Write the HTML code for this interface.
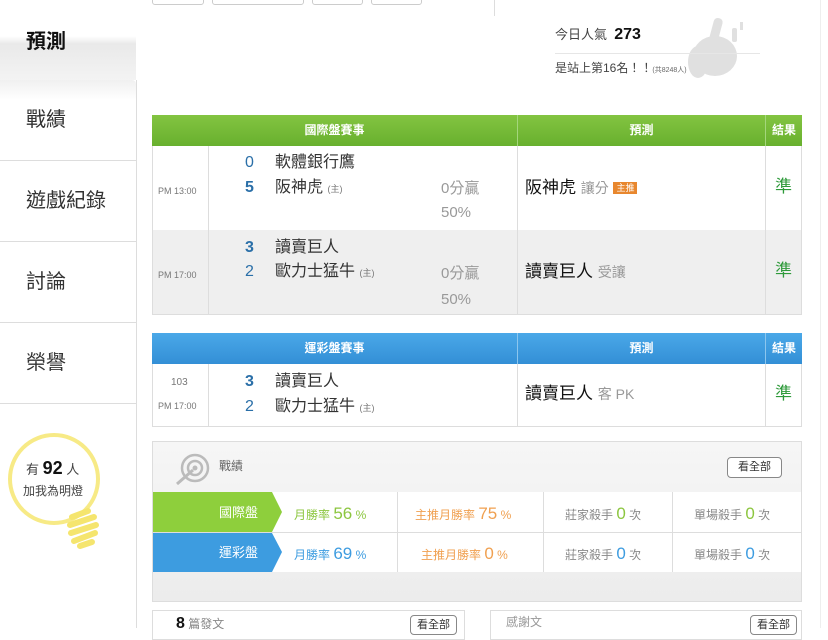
<!DOCTYPE html>
<html><head><meta charset="utf-8"><style>
*{margin:0;padding:0;box-sizing:border-box}
body{width:828px;height:628px;overflow:hidden;background:#fff;font-family:"Liberation Sans","Noto Sans CJK TC",sans-serif;color:#333;position:relative;line-height:1.15}
.a{position:absolute}
.tab{position:absolute;left:0;width:136px;height:81px;border-bottom:1px solid #ddd;font-size:20px;padding-left:26px;line-height:81px;color:#333}
.btn{position:absolute;top:-4px;height:9px;border:1px solid #ccc;border-radius:3px}
.hd{position:absolute;color:#fff;font-size:12px;font-weight:bold;text-align:center;line-height:31px}
.sc{font-size:16px;color:#2a6fa8;position:absolute;line-height:20px}
.tm{font-size:16px;color:#333;position:absolute;line-height:20px}
.sm{font-size:9px;color:#777}
.gray{color:#999}
.vb{position:absolute;border:1px solid #888;border-radius:4px;font-size:11px;background:#fff;text-align:center;color:#333;line-height:18px}
</style></head><body>
<div class="a" style="left:0;top:0;width:136px;height:80px;background:linear-gradient(#fff 0,#fff 45%,#e9e9e9 55%,#f3f3f3 100%)"></div>
<div class="a" style="left:26px;top:31px;font-size:20px;font-weight:bold;color:#111">預測</div>
<div class="a" style="left:136px;top:80px;width:1px;height:548px;background:#ddd"></div>
<div class="a" style="left:0;top:80px;width:136px;height:20px;background:linear-gradient(#f0f0f0,#fff);border-top-right-radius:4px"></div>
<div class="tab" style="top:80px;background:transparent">戰績</div>
<div class="tab" style="top:161px">遊戲紀錄</div>
<div class="tab" style="top:242px">討論</div>
<div class="tab" style="top:323px">榮譽</div>
<svg class="a" style="left:0;top:425px" width="120" height="130"><circle cx="54" cy="54" r="44" fill="none" stroke="#f7ea86" stroke-width="4"/><g stroke="#f5e56e" stroke-width="6" stroke-linecap="round"><line x1="72" y1="92" x2="88" y2="86"/><line x1="70" y1="100" x2="94" y2="92"/><line x1="71" y1="108" x2="96" y2="100"/><line x1="74" y1="116" x2="95" y2="108"/><line x1="80" y1="121" x2="92" y2="117"/></g></svg>
<div class="a" style="left:26px;top:458px;font-size:13px;color:#444">有 <b style="font-size:18px;color:#111">92</b> 人</div>
<div class="a" style="left:23px;top:485px;font-size:12px;color:#444">加我為明燈</div>
<div class="btn" style="left:152px;width:52px"></div>
<div class="btn" style="left:212px;width:92px"></div>
<div class="btn" style="left:312px;width:51px"></div>
<div class="btn" style="left:371px;width:51px"></div>
<div class="a" style="left:494px;top:0;width:1px;height:16px;background:#ddd"></div>
<div class="a" style="left:820px;top:0;width:1px;height:628px;background:#eee"></div>
<svg class="a" style="left:670px;top:16px" width="90" height="70"><g fill="#e0e0e0"><ellipse cx="45" cy="40" rx="22" ry="20"/><ellipse cx="28" cy="46" rx="10" ry="16"/><rect x="40" y="2" width="9" height="30" rx="4" transform="rotate(15 46 20)"/><rect x="62" y="12" width="5" height="14" rx="2"/><rect x="70" y="6" width="3" height="8"/></g></svg>
<div class="a" style="left:555px;top:26px;font-size:13px;color:#444">今日人氣 &nbsp;<b style="font-size:16px;color:#111">273</b></div>
<div class="a" style="left:555px;top:53px;width:205px;height:1px;background:#e6e6e6"></div>
<div class="a" style="left:555px;top:62px;font-size:12px;color:#444">是站上第16名！！<span style="font-size:7px;color:#666">(共8248人)</span></div>
<div class="a" style="left:152px;top:115px;width:650px;height:200px;border:1px solid #ddd"></div>
<div class="a" style="left:152px;top:115px;width:650px;height:31px;background:linear-gradient(#83c441,#68b02e)"></div>
<div class="hd" style="left:152px;top:115px;width:365px">國際盤賽事</div>
<div class="hd" style="left:517px;top:115px;width:248px;border-left:1px solid #a4d67c">預測</div>
<div class="hd" style="left:765px;top:115px;width:37px;border-left:1px solid #a4d67c">結果</div>
<div class="a" style="left:153px;top:230px;width:648px;height:84px;background:#efefef"></div>
<div class="a" style="left:208px;top:146px;width:1px;height:168px;background:#ddd"></div>
<div class="a" style="left:517px;top:146px;width:1px;height:168px;background:#ddd"></div>
<div class="a" style="left:765px;top:146px;width:1px;height:168px;background:#ddd"></div>
<div class="a sm" style="left:158px;top:186px">PM 13:00</div>
<div class="sc" style="left:245px;top:153px">0</div><div class="tm" style="left:275px;top:153px">軟體銀行鷹</div>
<div class="sc" style="left:245px;top:178px;font-weight:bold">5</div><div class="tm" style="left:275px;top:178px">阪神虎 <span class="sm">(主)</span></div>
<div class="a gray" style="left:441px;top:177px;font-size:15px;line-height:24px">0分贏<br>50%</div>
<div class="a" style="left:525px;top:177px;font-size:17px;line-height:22px;color:#111">阪神虎 <span style="font-size:14px;color:#999">讓分</span> <span style="font-size:9px;background:#e8872e;color:#fff;padding:1px 3px;vertical-align:2px">主推</span></div>
<div class="a" style="left:775px;top:176px;font-size:17px;line-height:22px;color:#2e9a3a">準</div>
<div class="a sm" style="left:158px;top:270px">PM 17:00</div>
<div class="sc" style="left:245px;top:238px;font-weight:bold">3</div><div class="tm" style="left:275px;top:238px">讀賣巨人</div>
<div class="sc" style="left:245px;top:262px">2</div><div class="tm" style="left:275px;top:262px">歐力士猛牛 <span class="sm">(主)</span></div>
<div class="a gray" style="left:441px;top:261px;font-size:15px;line-height:26px">0分贏<br>50%</div>
<div class="a" style="left:525px;top:261px;font-size:17px;line-height:22px;color:#111">讀賣巨人 <span style="font-size:14px;color:#999">受讓</span></div>
<div class="a" style="left:775px;top:260px;font-size:17px;line-height:22px;color:#2e9a3a">準</div>
<div class="a" style="left:152px;top:333px;width:650px;height:94px;border:1px solid #ddd"></div>
<div class="a" style="left:152px;top:333px;width:650px;height:31px;background:linear-gradient(#4aa8e8,#338fd6)"></div>
<div class="hd" style="left:152px;top:333px;width:365px">運彩盤賽事</div>
<div class="hd" style="left:517px;top:333px;width:248px;border-left:1px solid #8cc6ee">預測</div>
<div class="hd" style="left:765px;top:333px;width:37px;border-left:1px solid #8cc6ee">結果</div>
<div class="a" style="left:208px;top:364px;width:1px;height:62px;background:#ddd"></div>
<div class="a" style="left:517px;top:364px;width:1px;height:62px;background:#ddd"></div>
<div class="a" style="left:765px;top:364px;width:1px;height:62px;background:#ddd"></div>
<div class="a sm" style="left:171px;top:377px;font-size:10px">103</div>
<div class="a sm" style="left:158px;top:401px">PM 17:00</div>
<div class="sc" style="left:245px;top:372px;font-weight:bold">3</div><div class="tm" style="left:275px;top:372px">讀賣巨人</div>
<div class="sc" style="left:245px;top:397px">2</div><div class="tm" style="left:275px;top:397px">歐力士猛牛 <span class="sm">(主)</span></div>
<div class="a" style="left:525px;top:383px;font-size:17px;line-height:22px;color:#111">讀賣巨人 <span style="font-size:14px;color:#999">客 PK</span></div>
<div class="a" style="left:775px;top:383px;font-size:17px;line-height:22px;color:#2e9a3a">準</div>
<div class="a" style="left:152px;top:441px;width:650px;height:161px;border:1px solid #ddd;background:linear-gradient(#f6f6f6,#ececec)"></div>
<svg class="a" style="left:173px;top:450px" width="40" height="40"><g fill="none" stroke="#bbb" stroke-width="2.5"><circle cx="22" cy="18" r="13"/><circle cx="22" cy="18" r="7"/></g><circle cx="22" cy="18" r="2.5" fill="#bbb"/><line x1="4" y1="34" x2="20" y2="20" stroke="#bbb" stroke-width="3"/></svg>
<div class="a" style="left:219px;top:460px;font-size:12px;color:#666">戰績</div>
<div class="vb" style="left:727px;top:457px;width:55px;height:21px;line-height:19px">看全部</div>
<div class="a" style="left:153px;top:492px;width:648px;height:80px;background:#fff"></div>
<div class="a" style="left:153px;top:532px;width:648px;height:1px;background:#ddd"></div>
<svg class="a" style="left:153px;top:492px" width="130" height="81"><polygon points="0,0 119,0 129,20 119,40 0,40" fill="#8ecf3c"/><polygon points="0,41 119,41 129,60 119,80 0,80" fill="#3d9ce0"/></svg>
<div class="a" style="left:219px;top:506px;font-size:13px;color:#fff">國際盤</div>
<div class="a" style="left:219px;top:546px;font-size:13px;color:#fff">運彩盤</div>
<div class="a" style="left:294px;top:504px;font-size:12px;color:#8cc63f">月勝率 <span style="font-size:17px">56</span> %</div>
<div class="a" style="left:294px;top:544px;font-size:12px;color:#3d9ce0">月勝率 <span style="font-size:17px">69</span> %</div>
<div class="a" style="left:397px;top:492px;width:1px;height:80px;background:#ddd"></div>
<div class="a" style="left:543px;top:492px;width:1px;height:80px;background:#ddd"></div>
<div class="a" style="left:672px;top:492px;width:1px;height:80px;background:#ddd"></div>
<div class="a" style="left:415px;top:504px;font-size:12px;color:#f0a050">主推月勝率 <span style="font-size:17px">75</span> %</div>
<div class="a" style="left:421px;top:544px;font-size:12px;color:#f0a050">主推月勝率 <span style="font-size:17px">0</span> %</div>
<div class="a" style="left:565px;top:504px;font-size:12px;color:#888">莊家殺手 <span style="font-size:17px;color:#8cc63f">0</span> 次</div>
<div class="a" style="left:565px;top:544px;font-size:12px;color:#888">莊家殺手 <span style="font-size:17px;color:#3d9ce0">0</span> 次</div>
<div class="a" style="left:694px;top:504px;font-size:12px;color:#888">單場殺手 <span style="font-size:17px;color:#8cc63f">0</span> 次</div>
<div class="a" style="left:694px;top:544px;font-size:12px;color:#888">單場殺手 <span style="font-size:17px;color:#3d9ce0">0</span> 次</div>
<div class="a" style="left:152px;top:610px;width:313px;height:30px;border:1px solid #ddd"></div>
<div class="a" style="left:490px;top:610px;width:312px;height:30px;border:1px solid #ddd"></div>
<div class="a" style="left:176px;top:615px;font-size:12px;color:#888"><b style="font-size:16px;color:#111">8</b> 篇發文</div>
<div class="a" style="left:506px;top:616px;font-size:12px;color:#999">感謝文</div>
<div class="vb" style="left:410px;top:615px;width:47px;height:20px">看全部</div>
<div class="vb" style="left:750px;top:615px;width:47px;height:20px">看全部</div>
</body></html>
